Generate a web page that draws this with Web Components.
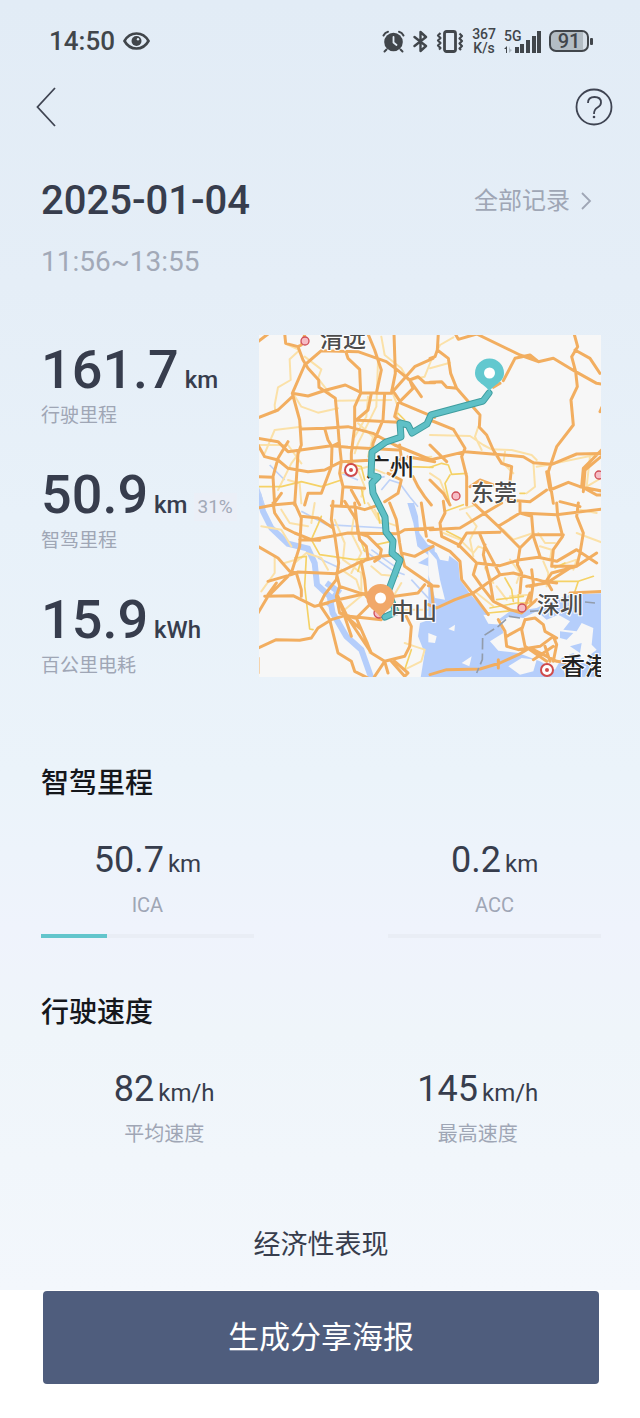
<!DOCTYPE html>
<html lang="zh-CN">
<head>
  <meta charset="UTF-8">
  <meta name="viewport" content="width=device-width, initial-scale=1.0">
  <title>行程记录</title>
  <style>
    body {
      margin: 0;
      background: #fff;
      color: #373d4d;
      font-family: Roboto, "Noto Sans CJK SC", sans-serif;
    }
  </style>
</head>
<body>
  <trip-page>
    <status-bar slot="top" time="14:50" battery="91"></status-bar>
    <nav-bar slot="top"></nav-bar>

    <trip-heading date="2025-01-04" time="11:56~13:55">全部记录</trip-heading>

    <trip-overview>
      <trip-stat value="161.7" unit="km">行驶里程</trip-stat>
      <trip-stat value="50.9" unit="km" badge="31%">智驾里程</trip-stat>
      <trip-stat value="15.9" unit="kWh">百公里电耗</trip-stat>
      <route-map slot="map"></route-map>
    </trip-overview>

    <metric-section heading="智驾里程">
      <metric-item value="50.7" unit="km" progress="31">ICA</metric-item>
      <metric-item value="0.2" unit="km" progress="0">ACC</metric-item>
    </metric-section>

    <metric-section heading="行驶速度" class="speed">
      <metric-item value="82" unit="km/h">平均速度</metric-item>
      <metric-item value="145" unit="km/h">最高速度</metric-item>
    </metric-section>

    <next-heading>经济性表现</next-heading>
    <share-bar slot="bottom">生成分享海报</share-bar>
  </trip-page>

  <script>
    class TripPage extends HTMLElement {
      constructor() {
        super();
        const shadow = this.attachShadow({ mode: 'open' });
        shadow.innerHTML = `
          <style>
            :host {
              display: block;
            }

            .sheet {
              padding-bottom: 25px;
              background: linear-gradient(#e2ecf6 0%, #e5eef7 22%, #e8f1f9 40%, #ebf3fa 60%, #eff3fc 72%, #eff5fa 80%, #f3f7fc 100%);
            }

            main {
              padding: 41px 39px 0 41px;
            }
          </style>
          <div class="sheet">
            <slot name="top"></slot>
            <main><slot></slot></main>
          </div>
          <slot name="bottom"></slot>
        `;
      }
    }

    class StatusBar extends HTMLElement {
      constructor() {
        super();
        const shadow = this.attachShadow({ mode: 'open' });
        shadow.innerHTML = `
          <style>
            :host {
              display: flex;
              align-items: center;
              justify-content: space-between;
              height: 82px;
              padding: 0 47px 0 49px;
              color: #41464b;
              font-weight: 500;
            }

            .left, .right {
              display: flex;
              align-items: center;
            }

            .left {
              gap: 8px;
              font-size: 26px;
            }

            .right {
              gap: 8px;
            }

            svg {
              display: block;
            }

            .speed {
              display: flex;
              flex-direction: column;
              font-size: 14px;
              line-height: 14px;
              text-align: center;
            }

            .signal {
              display: grid;
              width: 37px;
            }

            .signal span, .signal svg {
              grid-area: 1 / 1;
            }

            .signal span {
              font-size: 14px;
              line-height: 12px;
            }

            .battery {
              display: flex;
              align-items: center;
              gap: 1px;
            }

            .cell {
              box-sizing: border-box;
              width: 40px;
              height: 22px;
              border: 2px solid #41464b;
              border-radius: 7px;
              background: linear-gradient(90deg, #b3bdc4 90%, #d7e0e8 90%);
              font-size: 20px;
              line-height: 18px;
              text-align: center;
            }

            .cap {
              width: 3px;
              height: 7px;
              border-radius: 1px;
              background: #41464b;
            }
          </style>
          <div class="left">
            <span>${this.getAttribute('time')}</span>
            <svg width="27" height="18" viewBox="0 0 27 18">
              <path d="M1.5 9C7-1 20-1 25.500 9C20 19 7 19 1.500 9Z" fill="none" stroke="#41464b" stroke-width="2.600"/>
              <circle cx="13.500" cy="9" r="5" fill="#41464b"/>
              <circle cx="15" cy="7.200" r="1.200" fill="#e2ecf6"/>
            </svg>
          </div>
          <div class="right">
            <svg width="23" height="23" viewBox="0 0 23 23" fill="none" stroke="#41464b" stroke-width="2" stroke-linecap="round">
              <circle cx="11.500" cy="12" r="9.300" fill="#41464b" stroke="none"/>
              <path d="M1.500 5.500Q3 2.500 6 1.800M21.500 5.500Q20 2.500 17 1.800M4.500 19.500L2.500 21.500M18.500 19.500L20.500 21.500"/>
              <path d="M11.500 7V12.500L14.500 15" stroke="#e2ecf6" stroke-width="1.800"/>
            </svg>
            <svg width="15" height="23" viewBox="0 0 15 23" fill="none" stroke="#41464b" stroke-width="2.400" stroke-linejoin="round" stroke-linecap="round">
              <path d="M1.500 7L13 16L7.500 21V2L13 7L1.500 16"/>
            </svg>
            <svg width="28" height="23" viewBox="0 0 28 23" fill="none" stroke="#41464b" stroke-width="2.200" stroke-linejoin="round">
              <rect x="8.500" y="1.500" width="11" height="20" rx="2" stroke-width="2.800"/>
              <path d="M4.500 3L2 5.500L4.500 8L2 10.500L4.500 13L2 15.500L4.500 18L3 19.500M23.500 3.500L26 6L23.500 8.500L26 11L23.500 13.500L26 16L23.500 18.500L25 20"/>
            </svg>
            <div class="speed"><span>367</span><span>K/s</span></div>
            <div class="signal">
              <span>5G</span>
              <svg width="37" height="23" viewBox="0 0 37 23" fill="#41464b">
                <path d="M11 17h4v6h-4zM16 14h4v9h-4zM22 10h4v13h-4zM28 6h4v17h-4zM33 1h4v22h-4z"/>
                <path d="M0 19L3 16V23H2V19Z"/>
                <path d="M5 16V23L8 20L6 19Z" fill="#aeb9c2"/>
              </svg>
            </div>
            <div class="battery">
              <div class="cell">${this.getAttribute('battery')}</div>
              <div class="cap"></div>
            </div>
          </div>
        `;
      }
    }

    class NavBar extends HTMLElement {
      constructor() {
        super();
        const shadow = this.attachShadow({ mode: 'open' });
        shadow.innerHTML = `
          <style>
            :host {
              display: flex;
              align-items: center;
              justify-content: space-between;
              height: 50px;
              padding: 0 27px 0 35px;
            }

            button {
              padding: 0;
              border: 0;
              background: none;
            }

            svg {
              display: block;
              fill: none;
              stroke: #3f4452;
              stroke-width: 1.800;
            }
          </style>
          <button aria-label="返回">
            <svg width="22" height="42" viewBox="0 0 22 42"><path d="M20 2L2.500 21L20 40"/></svg>
          </button>
          <button aria-label="帮助">
            <svg width="38" height="38" viewBox="0 0 38 38">
              <circle cx="19" cy="19" r="17.500"/>
              <path d="M13 15Q13 9 19.500 9Q26 9 26 14.500Q26 17.500 22.500 19.500Q19 21.500 19 26"/>
              <circle cx="19" cy="29" r="1.300" fill="#3f4452" stroke="none"/>
            </svg>
          </button>
        `;
      }
    }

    class TripHeading extends HTMLElement {
      constructor() {
        super();
        const shadow = this.attachShadow({ mode: 'open' });
        shadow.innerHTML = `
          <style>
            :host {
              display: block;
              margin-bottom: 55px;
            }

            .row {
              display: flex;
              align-items: center;
              justify-content: space-between;
              margin-bottom: 15px;
            }

            h1 {
              margin: 0;
              font-size: 40px;
              line-height: 56px;
              font-weight: 500;
            }

            a {
              display: flex;
              align-items: center;
              gap: 10px;
              padding-right: 9px;
              color: #9fa6b5;
              font-size: 24px;
              line-height: 54px;
              text-decoration: none;
            }

            .time {
              color: #a2a9b7;
              font-size: 28px;
              line-height: 36px;
            }
          </style>
          <div class="row">
            <h1>${this.getAttribute('date')}</h1>
            <a href="#records">
              <slot></slot>
              <svg width="12" height="20" viewBox="0 0 12 20" fill="none" stroke="#9fa6b5" stroke-width="1.800"><path d="M2 2L10 10L2 18"/></svg>
            </a>
          </div>
          <div class="time">${this.getAttribute('time')}</div>
        `;
      }
    }

    class TripOverview extends HTMLElement {
      constructor() {
        super();
        const shadow = this.attachShadow({ mode: 'open' });
        shadow.innerHTML = `
          <style>
            :host {
              display: grid;
              grid-template-columns: minmax(200px, 218fr) 342fr;
              margin-bottom: 84px;
            }

            .stats {
              display: flex;
              flex-direction: column;
              gap: 33px;
              padding-top: 3px;
            }
          </style>
          <div class="stats"><slot></slot></div>
          <slot name="map"></slot>
        `;
      }
    }

    class TripStat extends HTMLElement {
      constructor() {
        super();
        const shadow = this.attachShadow({ mode: 'open' });
        const badge = this.getAttribute('badge');
        shadow.innerHTML = `
          <style>
            :host {
              display: block;
            }

            .value {
              display: flex;
              align-items: baseline;
              gap: 6px;
              height: 64px;
              font-weight: 500;
              white-space: nowrap;
            }

            .number {
              font-size: 54px;
              line-height: 64px;
            }

            .unit {
              font-size: 24px;
            }

            .badge {
              padding: 0 4px;
              background: #ebeff7;
              color: #a2a9b7;
              font-size: 19px;
              line-height: 28px;
              font-weight: 400;
            }

            .label {
              color: #9fa6b5;
              font-size: 19px;
              line-height: 28px;
            }
          </style>
          <div class="value">
            <span class="number">${this.getAttribute('value')}</span>
            <span class="unit">${this.getAttribute('unit')}</span>
            ${badge ? `<span class="badge">${badge}</span>` : ''}
          </div>
          <div class="label"><slot></slot></div>
        `;
      }
    }

    class RouteMap extends HTMLElement {
      constructor() {
        super();
        const shadow = this.attachShadow({ mode: 'open' });
        shadow.innerHTML = `
          <style>
            :host {
              display: block;
            }

            svg {
              display: block;
              width: 100%;
              background: #f7f7f7;
            }

            .roads, .route {
              fill: none;
              stroke-linejoin: round;
              stroke-linecap: round;
            }

            .water { fill: #b5cefb; }
            .land { fill: #f7f7f7; }
            .river { fill: none; stroke: #b5cefb; stroke-width: 18; }
            .stream { fill: none; stroke: #bed2f8; stroke-width: 5; }
            .minor { stroke: #fbe1a8; stroke-width: 6; }
            .yellow { stroke: #f5d266; stroke-width: 5; }
            .major { stroke: #f2ae60; stroke-width: 9; }
            .city { font-size: 23px; fill: #4c4c4c; font-weight: 500; stroke: #fff; stroke-width: 2px; paint-order: stroke; }
            .capital { font-size: 24px; fill: #222; font-weight: 500; stroke: #fff; stroke-width: 2px; paint-order: stroke; }
            .town { fill: #f6bcc5; stroke: #cf4d57; stroke-width: 1.300; }
          </style>
          <svg viewBox="0 0 342 342" role="img" aria-label="行驶路线">
            <g transform="scale(.33333)">
              <!-- rivers and the estuary -->
              <g transform="translate(-3,504)">
                <path class="river" d="M0 -30L15 25L40 75L90 122L150 137L170 180L177 245L215 280L224 330L265 400L310 440L340 525"/>
                <path class="river" d="M205 240L240 265L210 310"/>
                <path class="water" d="M448 0H468L480 40L484 90L510 125L530 130V195L480 180L515 160L478 130L466 60Z"/>
                <path class="water" d="M486 360L530 345V530H487L500 450L480 400Z"/>
                <path class="stream" d="M130 25L205 65L380 75M180 165L245 195M315 140L400 200L440 215M460 230L515 290M340 140L410 190"/>
              </g>
              <g transform="translate(-3,-15)">
                <path class="stream" d="M35 405L80 450M0 470L20 530M370 480L395 450L425 460L455 500L480 530M250 430L300 450M330 450L380 440"/>
              </g>
              <g transform="translate(513,504)">
                <path class="water" d="M-5 132L20 150L30 170L55 175L58 158L85 178L90 230L120 272L160 318L180 345L205 350L240 325L285 320L320 315L350 300L420 275L530 270V530H-5Z"/>
                <path class="land" d="M-5 142L20 170L30 230L45 290L15 285L-5 215ZM160 335L205 340L215 365L175 362ZM212 355L240 340L280 345L320 325L350 350L385 335L420 355L400 380L440 385L455 360L490 375L485 425L500 440L475 460L480 490L430 450L395 465L375 500L330 475L265 450L205 443L180 415L220 390ZM55 378L75 365L73 385ZM-5 390L20 400L15 420L-5 418ZM235 490L275 465L320 470L310 505L270 515ZM95 480L125 460L118 490ZM400 500L430 488L450 515L410 525Z"/>
                <path class="water" d="M390 385L430 390L410 410L390 405ZM420 430L455 420L450 450Z"/>
              </g>

              <g class="roads">
                <g class="minor">
                  <path transform="translate(-3,-15)" d="M85 42L125 60L95 88L98 150L60 172L50 225L52 245M140 80L190 118L180 145L215 190M105 190L130 230L180 248L240 235M232 212L400 210M360 95L355 230L300 340L290 370M370 20L380 75L430 115L450 150M520 90L500 140L455 150M330 200L325 260L290 320M20 370L50 300L130 290M0 345L90 345L130 400M300 280L345 320L330 380M250 430L330 410L380 430M400 180L420 230L415 270M60 480L100 400L130 360M90 450L125 460L130 520M420 390L520 380M300 420L320 470L310 500"/>
                  <path transform="translate(513,-15)" d="M25 55L30 45L70 22M0 115L60 98M0 315L120 318L160 345L185 358L245 360L305 375L320 390M145 290L135 320L155 360M225 365L220 400L250 430M310 395L315 470L290 490M320 410L350 405L520 370M0 430L30 450L50 500M480 380L470 470L520 440"/>
                  <path transform="translate(-3,504)" d="M10 70L70 80L100 130M50 160L50 210L10 265M230 50L260 120L255 170L310 210L310 280M290 30L280 90L310 150L280 210M250 200L295 230L305 260M70 20L95 60L150 70M170 0L160 60M340 190L370 215L420 220M430 240L400 290L430 330M310 380L330 420L335 450M440 420L470 430L500 440L490 475L440 500M110 180L145 150L190 165L210 200M350 20L370 60M400 320H510M260 320L320 270M80 180L130 165M330 0L360 50L420 70"/>
                  <path transform="translate(513,504)" d="M40 90L90 110L130 150L145 130L170 140M110 30L140 70L120 110L130 160M90 20L140 5M220 80L250 110L310 90M325 90L345 120L375 120M330 130L365 140L360 170M440 90L520 120M380 190L440 170L430 200M165 195L190 240M140 270L190 310M200 250L230 290M340 175L355 210L350 250M240 280L300 275M450 20L500 30M240 170L270 210L260 240"/>
                </g>
                <g class="yellow">
                  <path transform="translate(-3,-15)" d="M0 470H70L130 455L190 470L250 450M420 250L440 270M400 400L450 410L525 412M310 475L320 520M270 400L310 410L320 450"/>
                  <path transform="translate(513,-15)" d="M0 412L35 400L55 405L65 433L110 430M60 435L45 460L60 525M270 490H285"/>
                  <path transform="translate(-3,504)" d="M190 40L180 65L160 110L185 155L290 170L335 165M300 90L320 145M355 125L400 115M110 165L145 160L140 250L155 378L165 380M440 500L460 440M310 170L300 205M365 60L360 30"/>
                  <path transform="translate(513,504)" d="M45 25L100 5M50 85L100 110M225 225L245 260L250 295M180 315L260 300L310 300M175 330L275 320M360 235L445 235L490 220M445 235L435 265M375 195L405 180M200 290L280 280M265 275V310"/>
                </g>
                <g class="major">
                  <path transform="translate(-3,-15)" d="M80 10L83 40L120 50L135 90L150 115L182 150L183 172L232 205L240 290L243 330L250 395M30 12L0 35M145 0L130 45L120 50M140 105L190 62L300 65L385 95L412 115L455 150L490 200M140 105L103 190L150 198L205 180L262 165L310 188L400 190L470 110L525 85M103 190L125 270L130 345L120 370L115 450L110 525M0 263L60 240L103 200M265 70L270 85L305 118L308 190M330 12L350 60L370 120L355 190M408 10L412 130L400 190M455 150L465 175L420 220L410 260L430 275M455 150L480 140L500 158L530 158M410 190L430 220L530 262M308 190L290 230V290L280 370V400M340 190L330 240L295 270M290 270L420 277M130 297L200 295L270 290L345 310L410 345L520 390M200 295L210 330L222 350L220 410L205 450L190 490L150 490L140 525M0 325L60 335L90 365L220 347L270 352L420 360M90 335L60 385L45 440L50 525M0 345L20 380L60 390L90 415L150 425L200 420L250 395L350 390M0 440L45 442M250 395L245 430L255 470L250 525M380 190L375 270L345 340L340 400M240 340L220 350M425 345L430 385L400 420M255 470L320 475M390 430L430 450L420 490L380 515M465 440L480 470L500 500L520 525M450 380L530 395M280 480L305 525M45 525L70 490"/>
                  <path transform="translate(513,-15)" d="M75 10L85 28L140 12L270 75L325 95L370 85L437 125L500 160L530 165M25 10L22 60L55 85L62 130L80 175L150 255L148 292L170 315L190 360L215 400L245 410L240 455M22 60L15 80L0 85M0 157L35 155L50 172L80 175M220 152L255 85L300 75L325 95M210 160L190 172M432 10L443 50L425 80L437 125L442 170L423 210L430 285L380 350L355 425L370 520M435 60L480 85L510 130M530 200L510 245M0 270L70 298L105 355L95 380L110 440V525M0 390L105 365L280 380L310 398L365 403L440 372L525 370M0 345L50 395M520 355L460 415L455 470L500 495H525M525 370L465 420L460 485M350 425L360 480L415 457L450 470L515 483M120 470L150 450L190 465M230 510L300 515L350 480M0 450L40 490L60 525M390 515L450 530"/>
                  <path transform="translate(-3,504)" d="M0 15L50 5L110 0L130 45L125 130L100 210L30 280L0 330M130 40L180 45L225 75M45 0L50 30L80 75L110 90L160 110L220 100L270 90L420 92L440 80L525 75M125 110L185 112M225 -5L220 50L230 95L242 180L235 230L200 275L185 305L215 350L240 450L280 475L290 505L330 525M220 8L290 12L320 20L350 10M260 -5L295 50L305 110L325 130L330 165L310 180L320 230L325 280L360 320M290 0L300 90L330 100L370 140L365 165L350 175M0 130L60 165L95 205L115 210L130 260V280M30 235L100 215L120 207L235 212L270 195L310 175L365 160L420 155M20 280L105 278L170 310L240 290L330 270L370 290M55 240L30 275M170 310L210 300M0 435L55 410L125 412L160 405L180 375L220 350L260 338L370 350M240 285L270 345L310 380L340 450L380 475L440 460L455 430L460 370L445 340M380 475L350 520L345 530M310 380L295 345L370 270M235 210L245 250L235 280L245 330L290 345M270 345L340 450M240 280L280 400M395 0L415 50L425 120L430 150L470 160L525 130M430 150L440 190L520 245L525 300M500 245L480 270L410 280M490 0L505 100M400 475L440 520L450 510L410 475M0 465V510M380 475L390 510M245 250L320 275"/>
                  <path transform="translate(513,504)" d="M40 -5L45 30L30 60L35 100L85 125L140 180L210 188L270 170L325 163L380 175L440 140L500 180M0 80L90 75L190 15L215 0M130 0L205 70L270 135L262 185L275 210L270 270M205 70L270 30L305 40L310 100L330 160M270 0V30M270 30L380 35L520 18M85 130L110 90L210 88M380 0L383 40L398 100L370 140L365 190L440 190L500 150M445 0L440 40L460 90L450 150L440 190L365 210L345 240L300 250M310 95L400 95M270 135L310 95M-5 112L60 145L90 175L95 230L130 275L175 335M140 180L130 215L155 250L190 295L240 320L275 330L320 290M150 95L165 130L210 215L180 235L130 270L75 290L20 315L-5 305M165 125L160 155L180 235L190 295M210 215L250 210L340 235L380 240M305 200L310 240L302 295M280 325L300 270M-5 248L25 250M350 235L365 260M290 250L350 240L420 195M420 270L525 265M205 350L225 385L230 430L265 440L330 430L370 400L380 425L370 475M285 350L315 345L340 365L345 385L380 405M285 350L275 380L285 430L350 475M275 375L230 400M0 515L50 500L150 498L210 480L265 455L290 440M205 470V495M310 440L380 475L420 480M370 430L310 470M345 430L360 475"/>
                </g>
              </g>

              <g transform="translate(513,504)">
                <path d="M300 325L340 322M270 345L238 340L205 370L158 400L157 470L140 510M465 297L495 300" fill="none" stroke="#929cab" stroke-width="5" stroke-dasharray="34 12"/>
              </g>
            </g>

            <circle class="town" cx="46" cy="6" r="4"/>
            <circle class="town" cx="197" cy="161" r="4"/>
            <circle class="town" cx="340" cy="140" r="4"/>
            <circle class="town" cx="263" cy="273" r="4"/>
            <circle class="town" cx="120" cy="278" r="5"/>
            <circle cx="92" cy="135" r="6" fill="#fff" stroke="#d04b4b" stroke-width="2"/>
            <circle cx="92" cy="135" r="2" fill="#d04b4b"/>
            <circle cx="288" cy="335" r="6" fill="#fff" stroke="#d04b4b" stroke-width="2"/>
            <circle cx="288" cy="335" r="2" fill="#d04b4b"/>

            <text class="city" x="61" y="12">清远</text>
            <text class="capital" x="107" y="141">广州</text>
            <text class="city" x="212" y="166">东莞</text>
            <text class="city" x="278" y="278">深圳</text>
            <text class="capital" x="302" y="340">香港</text>

            <g class="route">
              <path d="M230 58L224 66L172 80L168 89L153 98L149 90L141 88L142 102L127 107L113 117L112 140L119 142L113 148L114 158L126 182L127 197L134 206L133 218L141 225L129 257L137 277L126 282" stroke="#3f9d9f" stroke-width="7"/>
              <path d="M230 58L224 66L172 80L168 89L153 98L149 90L141 88L142 102L127 107L113 117L112 140L119 142L113 148L114 158L126 182L127 197L134 206L133 218L141 225L129 257L137 277L126 282" stroke="#5fc0c6" stroke-width="5"/>
            </g>
            <text class="city" x="132" y="284">中山</text>
            <path d="M230.500 57C228 50 216 48 216 38A14.500 14.500 0 0 1 245 38C245 48 233 50 230.500 57Z" fill="#62c8cf"/>
            <circle cx="230.500" cy="38" r="5.500" fill="#fff"/>
            <path d="M121.500 283C119 276 107.500 274 107.500 263A14 14 0 0 1 135.500 263C135.500 274 124 276 121.500 283Z" fill="#f1a869"/>
            <circle cx="121.500" cy="263" r="5.500" fill="#fff"/>
          </svg>
        `;
      }
    }

    class MetricSection extends HTMLElement {
      constructor() {
        super();
        const shadow = this.attachShadow({ mode: 'open' });
        shadow.innerHTML = `
          <style>
            :host {
              --column: 38%;
              display: block;
              margin-bottom: 55px;
            }

            :host(.speed) {
              --column: 44%;
              margin-bottom: 77px;
            }

            h2 {
              margin: 0 0 32px;
              color: #15171c;
              font-size: 28px;
              line-height: 40px;
              font-weight: 500;
            }

            .items {
              display: flex;
              justify-content: space-between;
            }
          </style>
          <h2>${this.getAttribute('heading')}</h2>
          <div class="items"><slot></slot></div>
        `;
      }
    }

    class MetricItem extends HTMLElement {
      constructor() {
        super();
        const shadow = this.attachShadow({ mode: 'open' });
        const progress = this.getAttribute('progress');
        shadow.innerHTML = `
          <style>
            :host {
              display: block;
              width: var(--column);
              text-align: center;
            }

            .value {
              display: flex;
              align-items: baseline;
              justify-content: center;
              gap: 4px;
              height: 48px;
              margin-bottom: 7px;
            }

            .number {
              font-size: 36px;
              line-height: 48px;
            }

            .unit {
              font-size: 24px;
            }

            .label {
              color: #9fa6b5;
              font-size: 20px;
              line-height: 28px;
            }

            .bar {
              height: 4px;
              margin-top: 15px;
              background: #e9edf5;
            }

            .fill {
              height: 4px;
              background: #62c5cc;
            }
          </style>
          <div class="value">
            <span class="number">${this.getAttribute('value')}</span>
            <span class="unit">${this.getAttribute('unit')}</span>
          </div>
          <div class="label"><slot></slot></div>
          ${progress !== null ? `<div class="bar"><div class="fill" style="width: ${progress}%"></div></div>` : ''}
        `;
      }
    }

    class NextHeading extends HTMLElement {
      constructor() {
        super();
        const shadow = this.attachShadow({ mode: 'open' });
        shadow.innerHTML = `
          <style>
            :host {
              display: block;
            }

            h2 {
              margin: 0;
              font-size: 27px;
              line-height: 40px;
              font-weight: 400;
              text-align: center;
            }
          </style>
          <h2><slot></slot></h2>
        `;
      }
    }

    class ShareBar extends HTMLElement {
      constructor() {
        super();
        const shadow = this.attachShadow({ mode: 'open' });
        shadow.innerHTML = `
          <style>
            :host {
              display: block;
              padding: 1px 41px 34px 43px;
              background: #fff;
            }

            button {
              display: block;
              width: 100%;
              height: 93px;
              padding: 0;
              border: 0;
              border-radius: 4px;
              background: #4f5d7d;
              color: #fff;
              font-family: inherit;
              font-size: 31px;
              line-height: 40px;
            }
          </style>
          <button><slot></slot></button>
        `;
      }
    }

    customElements.define('trip-page', TripPage);
    customElements.define('status-bar', StatusBar);
    customElements.define('nav-bar', NavBar);
    customElements.define('trip-heading', TripHeading);
    customElements.define('trip-overview', TripOverview);
    customElements.define('trip-stat', TripStat);
    customElements.define('route-map', RouteMap);
    customElements.define('metric-section', MetricSection);
    customElements.define('metric-item', MetricItem);
    customElements.define('next-heading', NextHeading);
    customElements.define('share-bar', ShareBar);
  </script>
</body>
</html>
